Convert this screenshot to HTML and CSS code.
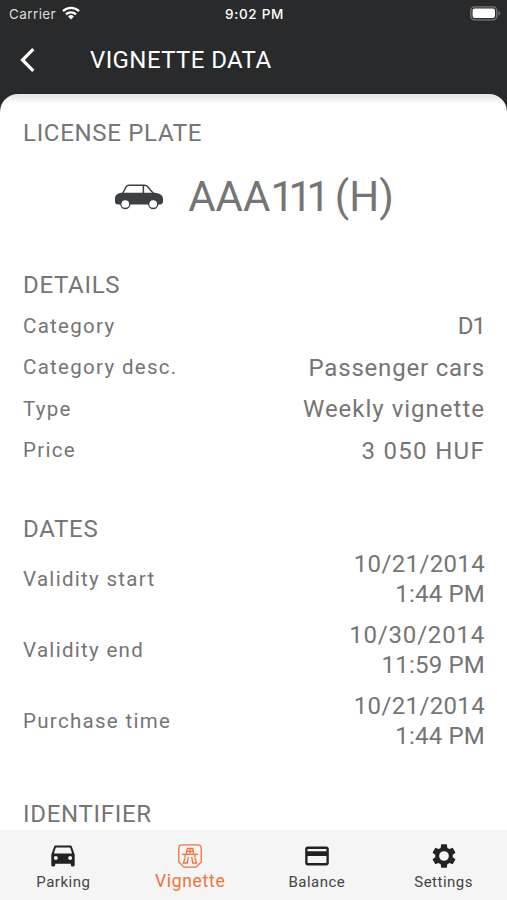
FILE: index.html
```html
<!DOCTYPE html>
<html lang="en">
<head>
  <meta charset="UTF-8">
  <meta name="viewport" content="width=device-width, initial-scale=1.0">
  <title>Vignette data</title>
  <link rel="stylesheet" href="styles.css">
</head>
<body>
  <div class="app">
    <div class="status-bar">
      <div class="status-left">
        <span class="carrier">Carrier</span>
        <svg class="wifi" viewBox="0 0 18 14" width="18" height="14">
          <g fill="none" stroke="#fff" stroke-width="2.3">
            <path d="M1 5.1a11.4 11.4 0 0 1 16 0"/>
            <path d="M4 8.4a7.1 7.1 0 0 1 10 0"/>
          </g>
          <path d="M9 13.4l-2.9-2.9a4.1 4.1 0 0 1 5.8 0z" fill="#fff"/>
        </svg>
      </div>
      <span class="clock">9:02 PM</span>
      <div class="status-right">
        <svg viewBox="0 0 31 15" width="31" height="15">
          <rect x="0.8" y="0.8" width="26" height="13" rx="3.8" fill="none" stroke="#77787a" stroke-width="1.3"/>
          <rect x="2.6" y="2.6" width="22.4" height="9.4" rx="2" fill="#fff"/>
          <path d="M28.4 5.2v4.2c1-.4 1.8-1.2 1.8-2.1s-.8-1.7-1.8-2.1z" fill="#77787a"/>
        </svg>
      </div>
    </div>

    <header class="header">
      <svg class="back" viewBox="0 0 16 26" width="16" height="26">
        <path d="M13.3 2.2L2.5 13l10.8 10.8" fill="none" stroke="#fff" stroke-width="3.2"/>
      </svg>
      <h1 class="title">VIGNETTE DATA</h1>
    </header>

    <main class="sheet">
      <section class="section">
        <h2 class="section-title">LICENSE PLATE</h2>
        <div class="plate">
          <svg class="car" viewBox="0 0 50 28" width="50" height="28">
            <path d="M8.5 10.5L12.3 3.7Q13 2.2 15 2.2H30.5Q32.3 2.2 33.5 3.6L39.5 10.5M29.4 2.2V10.5" fill="none" stroke="#3b4142" stroke-width="1.5"/>
            <path d="M7 9.8H41Q49 11 49 15.5V18.5Q49 21.6 45 21.6H4Q1 21.6 1 18.6V15Q1 11 7 9.8z" fill="#3b4142"/>
            <circle cx="11.3" cy="21" r="4.5" fill="#fff" stroke="#3b4142" stroke-width="1.3"/>
            <circle cx="39.2" cy="21" r="4.5" fill="#fff" stroke="#3b4142" stroke-width="1.3"/>
          </svg>
          <span class="plate-number">AAA<span class="digits">111</span> (H)</span>
        </div>
      </section>

      <section class="section">
        <h2 class="section-title details">DETAILS</h2>
        <div class="row">
          <span class="label">Category</span>
          <span class="value short">D1</span>
        </div>
        <div class="row">
          <span class="label">Category desc.</span>
          <span class="value">Passenger cars</span>
        </div>
        <div class="row">
          <span class="label">Type</span>
          <span class="value type">Weekly vignette</span>
        </div>
        <div class="row">
          <span class="label">Price</span>
          <span class="value price">3 050 HUF</span>
        </div>
      </section>

      <section class="section">
        <h2 class="section-title">DATES</h2>
        <div class="row row-date">
          <span class="label">Validity start</span>
          <span class="value"><span class="date">10/21/2014</span><br><span class="time">1:44 PM</span></span>
        </div>
        <div class="row row-date">
          <span class="label">Validity end</span>
          <span class="value">10/30/2014<br><span class="time">11:59 PM</span></span>
        </div>
        <div class="row row-date">
          <span class="label">Purchase time</span>
          <span class="value"><span class="date">10/21/2014</span><br><span class="time">1:44 PM</span></span>
        </div>
      </section>

      <section class="section">
        <h2 class="section-title">IDENTIFIER</h2>
      </section>
    </main>

    <nav class="tabs">
      <a class="tab">
        <svg viewBox="2 2 20 20" width="26" height="26">
          <path fill="#222" d="M18.92 5.01C18.72 4.42 18.16 4 17.5 4h-11c-.66 0-1.21.42-1.42 1.01L3 11v8c0 .55.45 1 1 1h1c.55 0 1-.45 1-1v-1h12v1c0 .55.45 1 1 1h1c.55 0 1-.45 1-1v-8l-2.08-5.99zM6.5 15c-.83 0-1.5-.67-1.5-1.5S5.67 12 6.5 12s1.5.67 1.5 1.5S7.33 15 6.5 15zm11 0c-.83 0-1.5-.67-1.5-1.5s.67-1.5 1.5-1.5 1.5.67 1.5 1.5-.67 1.5-1.5 1.5zM5 10l1.5-4.5h11L19 10H5z"/>
        </svg>
        <span>Parking</span>
      </a>
      <a class="tab active">
        <svg viewBox="0 0 26 26" width="26" height="26">
          <g fill="none" stroke="#f2713a" stroke-width="1.3">
            <path d="M5.5 1.8H20.5Q24.2 1.8 24.2 5.5V19L19 24.2H7L1.8 19V5.5Q1.8 1.8 5.5 1.8z"/>
            <path d="M5 11.3H21"/>
            <path d="M9.3 10.8L10.3 5.5H15.7L16.7 10.8M13 5.5V10.8M9.8 8.3H16.2"/>
            <path d="M8 11.5v2.5M18 11.5v2.5M8.2 14.5L6.4 20H10.3L11.3 14M17.8 14.5L19.6 20H15.7L14.7 14"/>
          </g>
        </svg>
        <span>Vignette</span>
      </a>
      <a class="tab">
        <svg viewBox="1 1 22 22" width="26" height="26">
          <path fill="#222" d="M20 4H4c-1.11 0-1.99.89-1.99 2L2 18c0 1.11.89 2 2 2h16c1.11 0 2-.89 2-2V6c0-1.11-.89-2-2-2zm0 14H4v-6h16v6zm0-10H4V6h16v2z"/>
        </svg>
        <span>Balance</span>
      </a>
      <a class="tab">
        <svg viewBox="1.3 1.3 21.4 21.4" width="26" height="26">
          <path fill="#222" d="M19.14 12.94c.04-.3.06-.61.06-.94 0-.32-.02-.64-.07-.94l2.03-1.58c.18-.14.23-.41.12-.61l-1.92-3.32c-.12-.22-.37-.29-.59-.22l-2.39.96c-.5-.38-1.03-.7-1.62-.94l-.36-2.54c-.04-.24-.24-.41-.48-.41h-3.84c-.24 0-.43.17-.47.41l-.36 2.54c-.59.24-1.13.57-1.62.94l-2.39-.96c-.22-.08-.47 0-.59.22L2.74 8.87c-.12.21-.08.47.12.61l2.03 1.58c-.05.3-.09.63-.09.94s.02.64.07.94l-2.03 1.58c-.18.14-.23.41-.12.61l1.92 3.32c.12.22.37.29.59.22l2.39-.96c.5.38 1.03.7 1.62.94l.36 2.54c.05.24.24.41.48.41h3.84c.24 0 .44-.17.47-.41l.36-2.54c.59-.24 1.13-.56 1.62-.94l2.39.96c.22.08.47 0 .59-.22l1.92-3.32c.12-.22.07-.47-.12-.61l-2.01-1.58zM12 16a4 4 0 1 1 0-8 4 4 0 0 1 0 8z"/>
        </svg>
        <span>Settings</span>
      </a>
    </nav>
  </div>
</body>
</html>
```
FILE: styles.css
```css
body {
  margin: 0;
  background-color: #292a2c;
  font-family: Roboto, "Liberation Sans", sans-serif;
}

.app {
  display: flex;
  flex-direction: column;
  width: 507px;
  height: 900px;
  overflow: hidden;
}

.status-bar {
  display: grid;
  grid-template-columns: 1fr auto 1fr;
  align-items: center;
  height: 27px;
  padding: 0 7px 0 9px;
  color: #fff;
  font-family: Inter, sans-serif;
  font-size: 13.5px;
}

.status-left {
  display: flex;
  align-items: center;
  gap: 6px;
}

.carrier {
  color: #dcdcdc;
  letter-spacing: 0.4px;
}

.wifi {
  margin-top: -2px;
}

.clock {
  font-size: 13.5px;
  font-weight: 500;
  letter-spacing: 0.7px;
}

.status-right {
  display: flex;
  justify-content: flex-end;
  margin-right: -1px;
}

.header {
  display: flex;
  align-items: center;
  height: 65px;
  padding: 0 0 2px 20px;
}

.title {
  margin: 0 0 0 54px;
  color: #fff;
  font-size: 24px;
  font-weight: 400;
  letter-spacing: 0.4px;
}

.sheet {
  flex: 1;
  min-height: 0;
  padding: 25px 22px 0 23px;
  overflow: hidden;
  background: linear-gradient(#e4e4e4, #fff 10px);
  border-radius: 18px 18px 0 0;
  color: #757575;
}

.section {
  margin-bottom: 44px;
}

.section-title {
  margin: 0;
  font-size: 24px;
  font-weight: 400;
  line-height: 28px;
  letter-spacing: 0.7px;
}

.plate {
  display: flex;
  align-items: center;
  justify-content: center;
  gap: 24px;
  height: 60px;
  margin-top: 20px;
}

.plate-number {
  font-size: 42px;
  line-height: 50px;
}

.digits {
  letter-spacing: -5.6px;
}

.details {
  margin-bottom: 6px;
}

.row {
  display: flex;
  align-items: center;
  justify-content: space-between;
  height: 41.5px;
}

.label {
  font-size: 20.5px;
  letter-spacing: 1.3px;
}

.value {
  padding-top: 2px;
  font-size: 24px;
  line-height: 29.5px;
  letter-spacing: 0.8px;
  text-align: right;
}

.short {
  letter-spacing: -1px;
}

.type {
  letter-spacing: 1px;
}

.price {
  letter-spacing: 1.3px;
}

.row-date {
  height: 71px;
}

.date {
  letter-spacing: 0.35px;
}

.time {
  letter-spacing: 0.2px;
}

.tabs {
  display: grid;
  grid-template-columns: repeat(4, 1fr);
  height: 70px;
  background-color: #f5f5f5;
}

.tab {
  display: flex;
  flex-direction: column;
  align-items: center;
  padding-top: 13px;
  color: #444;
  font-size: 15px;
  line-height: 18px;
  letter-spacing: 0.5px;
}

.tab span {
  margin-top: 4px;
}

.active {
  color: #f2713a;
  font-size: 17.5px;
  letter-spacing: 0.7px;
}

.active span {
  margin-top: 3px;
}
```
